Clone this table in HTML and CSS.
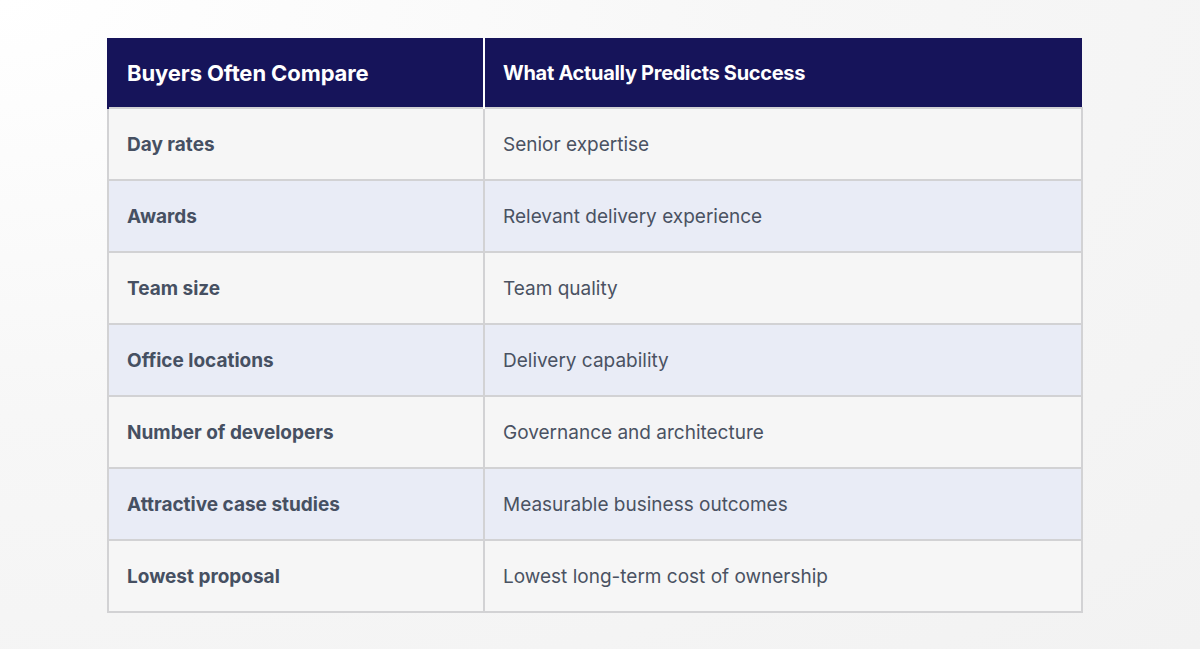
FILE: index.html
```html
<!DOCTYPE html>
<html>
<head>
<meta charset="utf-8">
<link rel="stylesheet" href="styles.css">
</head>
<body>
<div class="page">
  <table class="compare">
    <thead>
      <tr><th class="h-left">Buyers Often Compare</th><th class="h-right">What Actually Predicts Success</th></tr>
    </thead>
    <tbody>
      <tr><td>Day rates</td><td>Senior expertise</td></tr>
      <tr class="alt"><td>Awards</td><td>Relevant delivery experience</td></tr>
      <tr><td>Team size</td><td>Team quality</td></tr>
      <tr class="alt"><td>Office locations</td><td>Delivery capability</td></tr>
      <tr><td>Number of developers</td><td>Governance and architecture</td></tr>
      <tr class="alt"><td>Attractive case studies</td><td>Measurable business outcomes</td></tr>
      <tr><td>Lowest proposal</td><td>Lowest long-term cost of ownership</td></tr>
    </tbody>
  </table>
</div>
</body>
</html>
```
FILE: styles.css
```css
html, body {
  margin: 0;
  padding: 0;
}
body {
  width: 1200px;
  height: 649px;
  overflow: hidden;
  background: radial-gradient(ellipse at 0% 0%, #ffffff 0%, #f7f7f7 45%, #f2f2f2 100%);
  font-family: Inter, "Noto Sans", sans-serif;
}
.page {
  padding: 38px 0 0 107px;
}
.compare {
  border-collapse: collapse;
  width: 976px;
  table-layout: fixed;
}
.compare th, .compare td {
  text-align: left;
  padding: 0 0 0 18px;
  height: 70px;
  box-sizing: border-box;
}
.compare th:first-child, .compare td:first-child {
  width: 376px;
}
.compare thead th {
  background: #16145a;
  color: #ffffff;
  font-weight: 700;
  height: 70px;
  border-left: 2px solid #16145a;
}
.compare thead .h-left {
  font-size: 22px;
  letter-spacing: -0.1px;
}
.compare thead .h-right {
  font-size: 20px;
  letter-spacing: -0.3px;
  border-left: 2px solid #ffffff;
}
.compare tbody td {
  height: 72px;
  border: 2px solid #d2d2d4;
  font-size: 19px;
  color: #4a5262;
  background: #f6f6f6;
}
.compare tbody td:first-child {
  font-weight: 700;
  color: #465062;
}
.compare tbody tr.alt td {
  background: #e9ecf6;
}
```
